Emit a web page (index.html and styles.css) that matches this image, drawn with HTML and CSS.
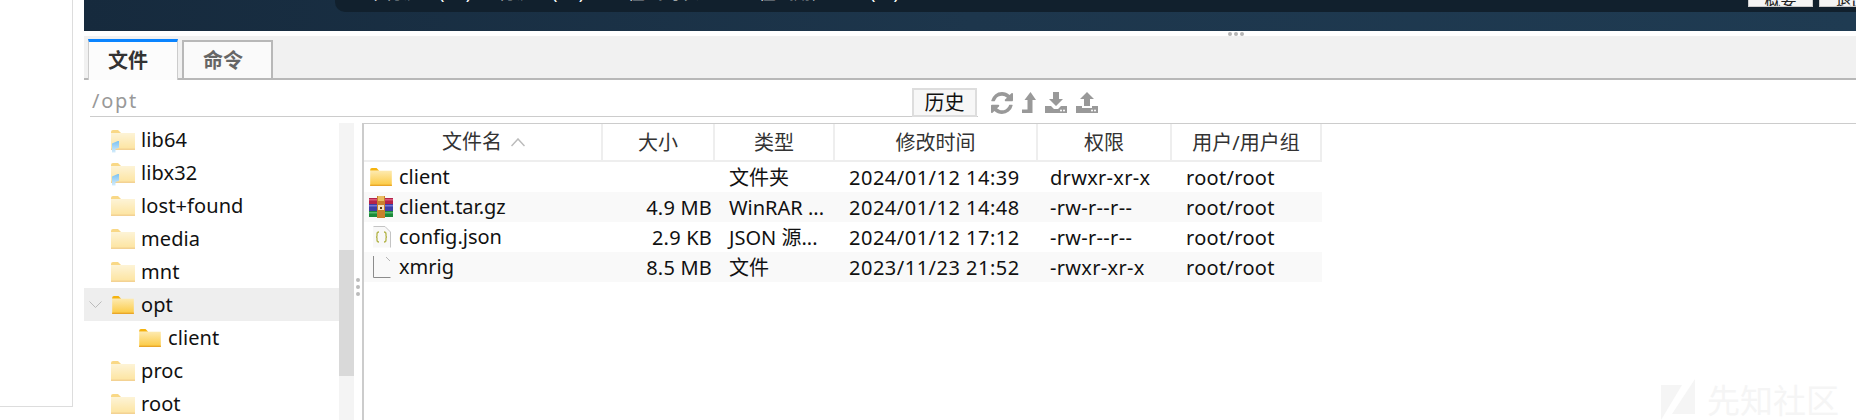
FILE: index.html
```html
<!DOCTYPE html>
<html lang="en">

<head>
    <meta charset="UTF-8" />
    <meta name="viewport" content="width=device-width, initial-scale=1.0" />
    <title>文件管理</title>
    <link rel="stylesheet" href="styles.css">
</head>

<body>
    <svg class="defs" width="0" height="0">
        <defs>
            <linearGradient id="folderFill" x1="0" y1="0" x2="0" y2="1">
                <stop offset="0" stop-color="#fdeab0" />
                <stop offset="1" stop-color="#fcc93f" />
            </linearGradient>
        </defs>
        <symbol id="folder" viewBox="0 0 24 20">
            <path d="M0 2q0-2 2-2h5l3 3h-10z" fill="#f5b30f" />
            <rect x="0" y="3" width="24" height="17" fill="url(#folderFill)" />
            <rect x="0" y="18.500" width="24" height="1.500" fill="#e9a62a" />
        </symbol>
    </svg>

    <div class="page">
        <div class="side"></div>

        <div class="main">
            <div class="hero">
                <div class="hero-bar">
                    <div class="hero-stats">
                        <span class="stat-a">下行流量(kB)</span>
                        <span class="stat-b">上行流量(kB)</span>
                        <span class="stat-c">在线时长</span>
                        <span class="stat-d">在线用户</span>
                        <span class="stat-e">(个)</span>
                    </div>
                    <div class="hero-btn">概要</div>
                    <div class="hero-btn hero-btn-last">退出</div>
                </div>
            </div>

            <div class="strip"><span></span><span></span><span></span></div>

            <div class="tabs">
                <div class="tab active">文件</div>
                <div class="tab">命令</div>
            </div>

            <div class="pathrow">
                <div class="pathbox">
                    <span class="path">/opt</span>
                    <button class="history">历史</button>
                </div>
                <div class="tools">
                    <svg class="t-refresh" viewBox="0 0 1536 1536"><path d="M1511 928q0 5-1 7-64 268-268 434.500t-478 166.500q-146 0-282.500-55t-243.500-157l-129 129q-19 19-45 19t-45-19-19-45v-448q0-26 19-45t45-19h448q26 0 45 19t19 45-19 45l-137 137q71 66 161 102t187 36q134 0 250-65t186-179q11-17 53-117 8-23 30-23h192q13 0 22.500 9.500t9.500 22.500zm25-800v448q0 26-19 45t-45 19h-448q-26 0-45-19t-19-45 19-45l138-138q-148-137-349-137-134 0-250 65t-186 179q-11 17-53 117-8 23-30 23h-199q-13 0-22.500-9.500t-9.500-22.500v-7q65-268 270-434.500t480-166.500q146 0 284 55.500t245 156.500l130-129q19-19 45-19t45 19 19 45z" /></svg>
                    <svg class="t-up" viewBox="0 0 14 21"><path d="M8.500 0l5.500 8h-3.500v13h-10.500v-3.500h5.500v-9.500h-3z" /></svg>
                    <svg class="t-tray" viewBox="0 0 22 21"><path d="M8 0h6v7h4l-7 7-7-7h4z" /><path d="M0 14h6l3 3h4l3-3h6v7h-22z" /><circle cx="16" cy="18.500" r="1" fill="#fff" /><circle cx="19" cy="18.500" r="1" fill="#fff" /></svg>
                    <svg class="t-tray" viewBox="0 0 22 21"><path d="M11 0l7 7h-4v7h-6v-7h-4z" /><path d="M0 14h6v2h10v-2h6v7h-22z" /><circle cx="16" cy="18.500" r="1" fill="#fff" /><circle cx="19" cy="18.500" r="1" fill="#fff" /></svg>
                </div>
            </div>

            <div class="browser">
                <div class="tree">
                    <div class="node"><span class="ficon pale"><svg><use href="#folder" /></svg><i class="link"></i></span>lib64</div>
                    <div class="node"><span class="ficon pale"><svg><use href="#folder" /></svg><i class="link"></i></span>libx32</div>
                    <div class="node"><span class="ficon pale"><svg><use href="#folder" /></svg></span>lost+found</div>
                    <div class="node"><span class="ficon pale"><svg><use href="#folder" /></svg></span>media</div>
                    <div class="node"><span class="ficon pale"><svg><use href="#folder" /></svg></span>mnt</div>
                    <div class="node selected">
                        <svg class="chevron" viewBox="0 0 13 8"><path d="M0.500 0.500l6 6 6-6" /></svg>
                        <span class="ficon"><svg><use href="#folder" /></svg></span>opt
                    </div>
                    <div class="node child"><span class="ficon"><svg><use href="#folder" /></svg></span>client</div>
                    <div class="node"><span class="ficon pale"><svg><use href="#folder" /></svg></span>proc</div>
                    <div class="node"><span class="ficon pale"><svg><use href="#folder" /></svg></span>root</div>
                </div>

                <div class="scrollbar"><div class="thumb"></div></div>

                <div class="splitter"><span></span><span></span><span></span></div>

                <div class="files">
                    <div class="row head">
                        <div class="c-name">文件名<svg class="sort" viewBox="0 0 14 9"><path d="M0.500 8l6.500-7 6.500 7" /></svg></div>
                        <div class="c-size">大小</div>
                        <div class="c-type">类型</div>
                        <div class="c-time">修改时间</div>
                        <div class="c-perm">权限</div>
                        <div class="c-user">用户/用户组</div>
                    </div>
                    <div class="row">
                        <div class="c-name"><svg class="type-icon folder-icon"><use href="#folder" /></svg>client</div>
                        <div class="c-size"></div>
                        <div class="c-type">文件夹</div>
                        <div class="c-time">2024/01/12 14:39</div>
                        <div class="c-perm">drwxr-xr-x</div>
                        <div class="c-user">root/root</div>
                    </div>
                    <div class="row">
                        <div class="c-name">
                            <svg class="type-icon" viewBox="0 0 24 22">
                                <rect x="0" y="2" width="24" height="6" fill="#b5234a" />
                                <rect x="0" y="3" width="24" height="1.500" fill="#d9587a" />
                                <rect x="0" y="8" width="24" height="7" fill="#3d3fa8" />
                                <rect x="0" y="9" width="24" height="1.500" fill="#7476d6" />
                                <rect x="0" y="15" width="24" height="6" fill="#1b8a3a" />
                                <rect x="0" y="16" width="24" height="1.500" fill="#56bb6f" />
                                <rect x="8" y="0" width="8" height="22" fill="#c9812d" />
                                <rect x="9" y="0" width="6" height="5" fill="#eabd62" />
                                <rect x="9" y="9" width="6" height="5" fill="#f1e2c0" />
                                <rect x="11" y="11" width="2" height="2" fill="#5a3716" />
                            </svg>client.tar.gz
                        </div>
                        <div class="c-size">4.9 MB</div>
                        <div class="c-type">WinRAR ...</div>
                        <div class="c-time">2024/01/12 14:48</div>
                        <div class="c-perm">-rw-r--r--</div>
                        <div class="c-user">root/root</div>
                    </div>
                    <div class="row">
                        <div class="c-name">
                            <svg class="type-icon" viewBox="0 0 24 22">
                                <path d="M4 0.500h12l5.500 5.500v15.500h-17.500z" fill="#f8f8f8" />
                                <path d="M16 0.500l5.500 5.500v15.500M4.500 0.500h11.500" fill="none" stroke="#c4c4c4" />
                                <path d="M10 6q-2 0-2 2v2q0 1-1 1 1 0 1 1v2q0 2 2 2M15 6q2 0 2 2v2q0 1 1 1-1 0-1 1v2q0 2-2 2" fill="none" stroke="#b3b44a" stroke-width="1.300" />
                            </svg>config.json
                        </div>
                        <div class="c-size">2.9 KB</div>
                        <div class="c-type">JSON 源...</div>
                        <div class="c-time">2024/01/12 17:12</div>
                        <div class="c-perm">-rw-r--r--</div>
                        <div class="c-user">root/root</div>
                    </div>
                    <div class="row">
                        <div class="c-name">
                            <svg class="type-icon" viewBox="0 0 24 22">
                                <path d="M4.500 0v21.500h17" fill="none" stroke="#8c8c8c" />
                                <path d="M17 1l4 4" fill="none" stroke="#b5b5b5" />
                            </svg>xmrig
                        </div>
                        <div class="c-size">8.5 MB</div>
                        <div class="c-type">文件</div>
                        <div class="c-time">2023/11/23 21:52</div>
                        <div class="c-perm">-rwxr-xr-x</div>
                        <div class="c-user">root/root</div>
                    </div>
                </div>
            </div>
        </div>
    </div>

    <div class="watermark">
        <svg viewBox="0 0 34 41"><path d="M0 6h21l-21 35zM34 0v35h-23z" /></svg>
        <span>先知社区</span>
    </div>
</body>

</html>
```

FILE: styles.css
```css
body {
    margin: 0;
    background: white;
    font-family: "Noto Sans", "Noto Sans CJK SC", sans-serif;
    font-size: 20px;
    color: #111;
}

.defs {
    position: absolute;
}

.page {
    display: flex;
    height: 420px;
    overflow: hidden;
}

.side {
    width: 72px;
    height: 406px;
    flex: none;
    border-right: 1px solid #ddd;
    border-bottom: 1px solid #ddd;
}

.main {
    flex: 1;
    min-width: 0;
    margin-left: 11px;
}

/* dark banner, only its lower edge is on screen */
.hero {
    height: 31px;
    background: linear-gradient(90deg, #162a3d, #1d364c 50%, #1f3b52);
    overflow: hidden;
}

.hero-bar {
    display: flex;
    height: 12px;
    margin-left: 251px;
    background: #11202d;
    border-bottom-left-radius: 10px;
    overflow: hidden;
}

.hero-stats {
    display: flex;
    flex: 1;
    min-width: 0;
    height: 26px;
    margin-top: -21px;
    padding-left: 32px;
    font-size: 18px;
    line-height: 26px;
    color: white;
    white-space: nowrap;
}

.stat-a { width: 113px; flex: none; }
.stat-b { width: 147px; flex: none; }
.stat-c { width: 131px; flex: none; }
.stat-d { width: 112px; flex: none; }

.hero-btn {
    width: 65px;
    height: 7px;
    flex: none;
    margin-right: 6px;
    box-sizing: border-box;
    background: #f4f4f4;
    border: 1px solid #ccc;
    border-top: 0;
    color: #222;
    font-size: 16px;
    line-height: 0;
    text-align: center;
    overflow: hidden;
}

.hero-btn-last {
    margin-right: -28px;
}

.strip {
    display: flex;
    justify-content: flex-end;
    gap: 2px;
    height: 5px;
    padding: 1px 612px 0 0;
    box-sizing: border-box;
}

.strip span {
    width: 4px;
    height: 4px;
    border-radius: 50%;
    background: #b5b5b5;
}

.tabs {
    display: flex;
    align-items: flex-end;
    gap: 4px;
    height: 44px;
    padding-left: 4px;
    box-sizing: border-box;
    background: #f1f1f1;
    border-bottom: 2px solid #b8b8b8;
}

.tab {
    width: 91px;
    height: 40px;
    margin-bottom: -2px;
    padding-left: 19px;
    box-sizing: border-box;
    background: #fafafa;
    border: 2px solid #b8b8b8;
    color: #666;
    font-weight: bold;
    line-height: 37px;
}

.tab.active {
    width: 90px;
    height: 41px;
    background: #fcfcfc;
    border: 0;
    border-left: 1px solid #ccc;
    border-right: 1px solid #ccc;
    border-top: 3px solid #0a84ff;
    color: #333;
}

.pathrow {
    display: flex;
    height: 43px;
    box-sizing: border-box;
    padding: 8px 0 6px 6px;
}

.pathbox {
    display: flex;
    justify-content: space-between;
    align-items: flex-end;
    width: 888px;
    border-bottom: 1px solid #ccc;
}

.path {
    margin-left: 2px;
    font-size: 20px;
    letter-spacing: 1.7px;
    color: #999;
    line-height: 30px;
}

.history {
    width: 65px;
    height: 29px;
    margin: 0 1px -1px 0;
    padding: 0;
    box-sizing: border-box;
    background: #f7f7f7;
    border: 2px solid #ddd;
    font-family: inherit;
    font-size: 20px;
    line-height: 24px;
    color: #111;
}

.tools {
    display: flex;
    align-items: center;
    gap: 9px;
    margin-left: 13px;
    fill: #999;
}

.t-refresh {
    width: 22px;
    height: 22px;
}

.t-up {
    width: 14px;
    height: 21px;
}

.t-tray {
    width: 22px;
    height: 21px;
}

.browser {
    display: flex;
    height: 297px;
    overflow: hidden;
}

.tree {
    width: 255px;
    flex: none;
}

.node {
    position: relative;
    display: flex;
    align-items: center;
    gap: 6px;
    height: 33px;
    padding-left: 27px;
    letter-spacing: 0.1px;
}

.node.selected {
    background: #eee;
}

.node.child {
    padding-left: 54px;
}

.chevron {
    position: absolute;
    left: 5px;
    top: 13px;
    width: 13px;
    height: 8px;
    fill: none;
    stroke: #bbb;
}

.ficon {
    position: relative;
    display: block;
    width: 24px;
    height: 18px;
}

.ficon svg {
    display: block;
    width: 22px;
    height: 18px;
    margin-left: 1px;
}

.ficon.pale {
    height: 20px;
}

.ficon.pale svg {
    width: 24px;
    height: 20px;
    margin-left: 0;
    opacity: 0.5;
}

.link {
    position: absolute;
    left: 1px;
    bottom: -3px;
    width: 7px;
    height: 12px;
    background: linear-gradient(#7cc2f2, #d8eefb);
    clip-path: polygon(0 25%, 100% 0, 100% 60%, 50% 70%, 50% 100%, 0 100%);
}

.scrollbar {
    width: 15px;
    flex: none;
    background: #f4f4f4;
}

.thumb {
    height: 126px;
    margin-top: 127px;
    background: #d9d9d9;
}

.splitter {
    display: flex;
    flex-direction: column;
    gap: 3px;
    width: 8px;
    flex: none;
    padding: 155px 0 0 2px;
    box-sizing: border-box;
}

.splitter span {
    width: 4px;
    height: 4px;
    border-radius: 50%;
    background: #bbb;
}

.files {
    flex: 1;
    border-top: 1px solid #ccc;
    border-left: 2px solid #ccc;
}

.row {
    display: flex;
    width: 958px;
    height: 30px;
    line-height: 32px;
    white-space: nowrap;
}

.row:nth-child(odd) {
    background: #f9f9f9;
}

.row.head {
    height: 38px;
    line-height: 38px;
    background: white;
    border-bottom: 2px solid #eee;
    box-sizing: border-box;
    color: #333;
}

.head > div {
    border-right: 2px solid #eee;
    box-sizing: border-box;
    text-align: center;
}

.c-name { width: 239px; }
.c-size { width: 112px; }
.c-type { width: 120px; }
.c-time { width: 203px; }
.c-perm { width: 134px; }
.c-user { width: 150px; }

.row .c-name {
    display: flex;
    align-items: center;
    padding-left: 5px;
    box-sizing: border-box;
}

.row.head .c-name {
    justify-content: center;
    padding-left: 2px;
}

.row:not(.head) .c-size {
    padding-right: 3px;
    box-sizing: border-box;
    letter-spacing: 0.2px;
    text-align: right;
}

.row:not(.head) .c-type,
.row:not(.head) .c-time,
.row:not(.head) .c-perm,
.row:not(.head) .c-user {
    padding-left: 14px;
    box-sizing: border-box;
    letter-spacing: 0.3px;
}

.row:not(.head) .c-time {
    letter-spacing: 0.5px;
}

.row:not(.head) .c-type {
    letter-spacing: 0;
}

.row:not(.head) .c-perm {
    padding-left: 12px;
}

.type-icon {
    width: 24px;
    height: 22px;
    margin-right: 6px;
    flex: none;
}

.folder-icon {
    width: 22px;
    height: 18px;
    margin: 0 7px 0 1px;
}

.sort {
    width: 14px;
    height: 9px;
    margin-left: 9px;
    fill: none;
    stroke: #bbb;
    stroke-width: 1.5;
}

.watermark {
    position: absolute;
    left: 1661px;
    top: 375px;
    display: flex;
    align-items: center;
    gap: 12px;
    fill: #f5f5f5;
    color: #f5f5f5;
    font-size: 33px;
}

.watermark svg {
    width: 34px;
    height: 41px;
}
```
